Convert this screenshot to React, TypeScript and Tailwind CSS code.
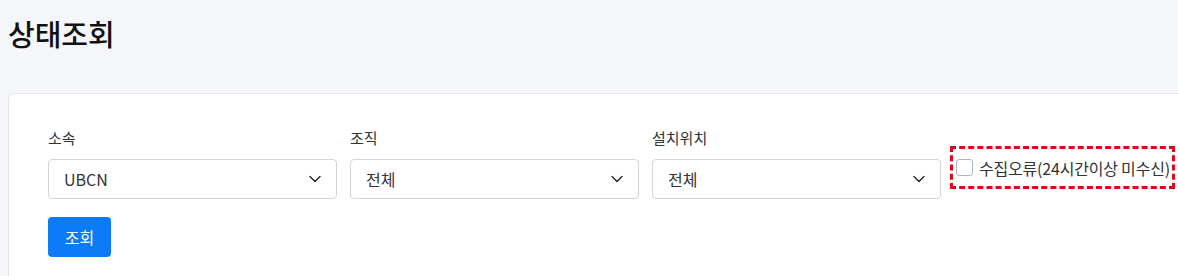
import { ChevronDown } from 'lucide-react'

const font = { fontFamily: '"Noto Sans CJK KR", "Noto Sans", sans-serif' }

function SelectBox({ label, value }: { label: string; value: string }) {
  return (
    <div className="flex w-[289px] shrink-0 flex-col">
      <label className="mb-[10px] text-[15px] leading-[22px] text-[#333]">{label}</label>
      <div className="flex h-[40px] items-center justify-between rounded-[4px] border border-[#d4d4d4] bg-white pl-[15px] pr-[11px]">
        <span className="text-[16px] text-[#333]">{value}</span>
        <ChevronDown className="h-[20px] w-[20px] text-[#222]" strokeWidth={1.6} />
      </div>
    </div>
  )
}

export default function App() {
  return (
    <div className="h-[276px] w-[1178px] overflow-hidden bg-[#f5f6fa]" style={font}>
      <h1 className="pl-[8px] pt-[12px] text-[29px] font-medium leading-[42px] text-[#111]">상태조회</h1>
      <div className="ml-[8px] mt-[39px] h-[200px] rounded-tl-[6px] border border-r-0 border-[#e3e5ea] bg-white pl-[39px] pt-[33px]">
        <div className="flex items-end gap-[13px]">
          <SelectBox label="소속" value="UBCN" />
          <SelectBox label="조직" value="전체" />
          <SelectBox label="설치위치" value="전체" />
          <div className="mb-[10px] ml-[-4px] flex h-[43px] shrink-0 items-center gap-[6px] whitespace-nowrap border-[3px] border-dashed border-[#e8001c] pl-[3px] pr-[2px]">
            <span className="h-[17px] w-[17px] shrink-0 rounded-[3px] border border-[#a9b6cc] bg-white" />
            <span className="text-[16px] tracking-[-0.2px] text-[#333]">수집오류(24시간이상 미수신)</span>
          </div>
        </div>
        <button className="mt-[18px] h-[40px] w-[63px] rounded-[4px] bg-[#0d7bf6] text-[16px] text-white">조회</button>
      </div>
    </div>
  )
}
